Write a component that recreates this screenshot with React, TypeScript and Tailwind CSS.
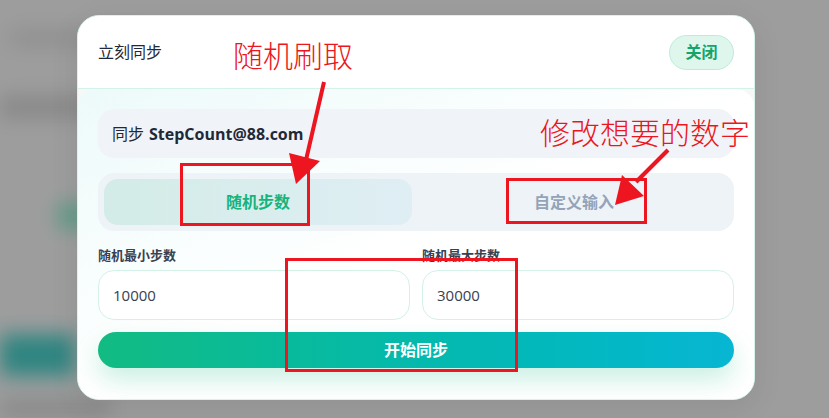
import React, { useState } from 'react';

const font = { fontFamily: '"Open Sans", "Noto Sans CJK SC", sans-serif' };
const callout = { fontFamily: '"Noto Sans CJK SC", sans-serif', fontWeight: 300 };

// Blurred page that sits behind the sync dialog
const Backdrop = () => (
  <div className="h-full w-full bg-[#9d9d9d] overflow-hidden">
    <div className="-m-[30px] h-[478px] bg-[#9d9d9d] blur-[10px] flex flex-col pl-[30px]">
      <div className="h-[60px]" />
      <div className="h-[16px] w-[140px] bg-[#8f8f8f] ml-[10px]" />
      <div className="h-[50px]" />
      <div className="h-[22px] w-[90px] bg-[#888888]" />
      <div className="h-[85px]" />
      <div className="h-[26px] w-[30px] bg-[#5f9b86] ml-[58px]" />
      <div className="h-[105px]" />
      <div className="h-[42px] w-[75px] bg-[#2f8581]" />
      <div className="h-[26px]" />
      <div className="h-[12px] w-[110px] bg-[#7f7f7f]" />
    </div>
  </div>
);

const Arrows = () => (
  <svg className="absolute inset-0 pointer-events-none" width="829" height="418" viewBox="0 0 829 418">
    <g stroke="#ec1520" strokeWidth="4" fill="none">
      <line x1="324" y1="82" x2="306" y2="160" />
      <line x1="668" y1="150" x2="636" y2="182" />
    </g>
    <g fill="#ec1520">
      <polygon points="289,153 320,161 296,184" />
      <polygon points="622,175 644,196 615,205" />
    </g>
    <g stroke="#ec1520" strokeWidth="3" fill="none">
      <rect x="181.5" y="164.5" width="127" height="60" />
      <rect x="507.5" y="179.5" width="138" height="43" />
      <rect x="286.5" y="259.5" width="230" height="111" />
    </g>
  </svg>
);

export default function App() {
  const [mode, setMode] = useState<'random' | 'custom'>('random');
  const [min, setMin] = useState('10000');
  const [max, setMax] = useState('30000');

  return (
    <div className="relative w-[829px] h-[418px] overflow-hidden" style={font}>
      <Backdrop />

      <div className="absolute inset-0 pl-[77px] pt-[15px]">
        <div className="w-[678px] h-[385px] rounded-[22px] bg-[#f6f8f8] border border-[#d8f3ea] flex flex-col overflow-hidden shadow-[0_8px_30px_rgba(0,0,0,0.08)]">
          <div className="h-[73px] shrink-0 bg-white border-b border-[#d5f2ea] flex items-center justify-between px-[20px]">
            <span className="text-[16px] text-[#1f2937]">立刻同步</span>
            <button className="w-[65px] h-[35px] rounded-full bg-[#dff6ed] border border-[#bdebd8] text-[#12a56c] text-[16px] font-semibold">
              关闭
            </button>
          </div>

          <div className="flex-1 rounded-t-[18px] bg-gradient-to-br from-[#edfafa] via-white to-white px-[20px] pt-[20px] flex flex-col">
            <div className="h-[49px] rounded-[16px] bg-[#f0f4f8] flex items-center pl-[14px] text-[16px] text-[#1f2937]">
              <span>同步</span>
              <span className="ml-[5px] font-bold">StepCount@88.com</span>
            </div>

            <div className="mt-[15px] h-[58px] rounded-[16px] bg-[#eef3f7] p-[6px] grid grid-cols-2 gap-[8px]">
              <button
                onClick={() => setMode('random')}
                className={`rounded-[14px] text-[16px] font-semibold ${
                  mode === 'random'
                    ? 'bg-gradient-to-r from-[#d3ece7] to-[#dfeef4] text-[#17b37d]'
                    : 'text-[#94a3b8]'
                }`}
              >
                随机步数
              </button>
              <button
                onClick={() => setMode('custom')}
                className={`rounded-[14px] text-[16px] font-semibold ${
                  mode === 'custom'
                    ? 'bg-gradient-to-r from-[#d3ece7] to-[#dfeef4] text-[#17b37d]'
                    : 'text-[#94a3b8]'
                }`}
              >
                自定义输入
              </button>
            </div>

            <div className="mt-[15px] grid grid-cols-2 gap-[12px]">
              <label className="flex flex-col gap-[6px]">
                <span className="text-[13px] leading-[18px] font-semibold text-[#374151]">随机最小步数</span>
                <input
                  value={min}
                  onChange={(e) => setMin(e.target.value)}
                  className="h-[50px] rounded-[16px] border border-[#d3f1e6] bg-white px-[14px] text-[15px] text-[#374151] outline-none"
                />
              </label>
              <label className="flex flex-col gap-[6px]">
                <span className="text-[13px] leading-[18px] font-semibold text-[#374151]">随机最大步数</span>
                <input
                  value={max}
                  onChange={(e) => setMax(e.target.value)}
                  className="h-[50px] rounded-[16px] border border-[#d3f1e6] bg-white px-[14px] text-[15px] text-[#374151] outline-none"
                />
              </label>
            </div>

            <button className="mt-[12px] h-[36px] rounded-full bg-gradient-to-r from-[#12bb82] to-[#07b6d3] text-white text-[16px] font-bold shadow-[0_12px_24px_rgba(16,185,129,0.22)]">
              开始同步
            </button>
          </div>
        </div>
      </div>

      {/* red callouts drawn on top */}
      <div className="absolute left-[233px] top-[36px] text-[30px] leading-[36px] text-[#ec1520]" style={callout}>
        随机刷取
      </div>
      <div className="absolute left-[540px] top-[113px] text-[30px] leading-[36px] text-[#ec1520]" style={callout}>
        修改想要的数字
      </div>
      <Arrows />
    </div>
  );
}
